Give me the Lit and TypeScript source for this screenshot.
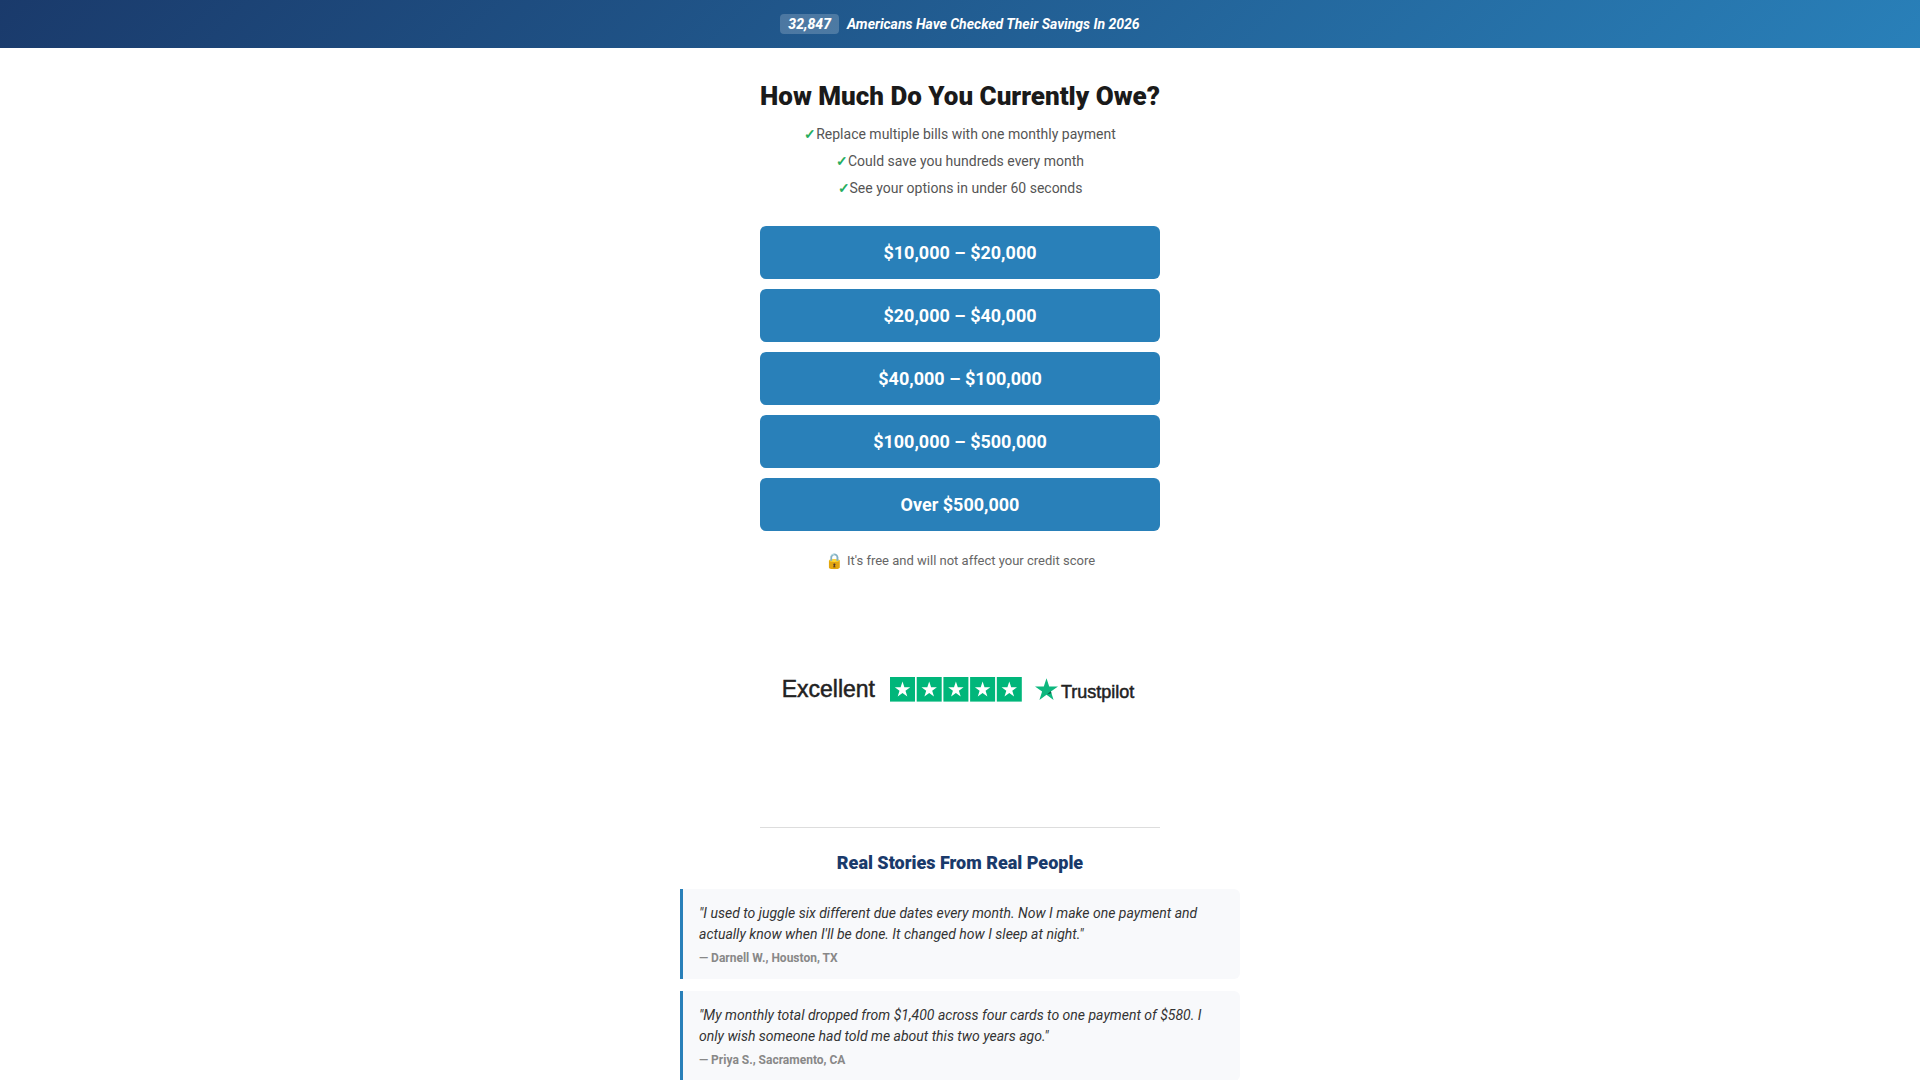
import { LitElement, html, svg, css } from "lit";
import { customElement } from "lit/decorators.js";

const BENEFITS = [
  "Replace multiple bills with one monthly payment",
  "Could save you hundreds every month",
  "See your options in under 60 seconds",
];

const AMOUNTS = [
  "$10,000 – $20,000",
  "$20,000 – $40,000",
  "$40,000 – $100,000",
  "$100,000 – $500,000",
  "Over $500,000",
];

const STORIES = [
  {
    quote:
      "I used to juggle six different due dates every month. Now I make one payment and actually know when I'll be done. It changed how I sleep at night.",
    author: "Darnell W., Houston, TX",
  },
  {
    quote:
      "My monthly total dropped from $1,400 across four cards to one payment of $580. I only wish someone had told me about this two years ago.",
    author: "Priya S., Sacramento, CA",
  },
];

// Left edge of each rating tile in the star strip.
const TILES = [0, 26.7, 53.4, 80.1, 106.8];

@customElement("trust-rating")
export class TrustRating extends LitElement {
  static styles = css`
    :host {
      display: flex;
      justify-content: center;
      align-items: center;
      font-family: "Liberation Sans", Arial, sans-serif;
      color: #222;
    }
    .word {
      font-size: 23px;
      line-height: 26px;
      -webkit-text-stroke: 0.5px #222;
    }
    .stars {
      display: block;
      width: 132px;
      height: 25px;
      margin: 0 13px 0 15px;
    }
    .brand {
      display: flex;
      align-items: center;
      gap: 3px;
    }
    .mark {
      display: block;
      width: 23px;
      height: 23px;
    }
    .name {
      font-size: 18px;
      line-height: 20px;
      padding-top: 6px;
      -webkit-text-stroke: 0.5px #222;
    }
  `;

  render() {
    return html`
      <span class="word">Excellent</span>
      <svg class="stars" viewBox="0 0 132 25" role="img" aria-label="5 out of 5 stars">
        ${TILES.map(
          (x) => svg`<g transform="translate(${x} 0)">
            <rect width="25" height="24.6" fill="#00b67a" />
            <path
              d="M12.5 4.6l1.9 5.6h5.8l-4.7 3.5 1.8 5.8-4.8-3.6-4.8 3.6 1.8-5.8-4.7-3.5h5.8z"
              fill="#fff"
            />
          </g>`
        )}
      </svg>
      <span class="brand">
        <svg class="mark" viewBox="0 0 23 23" aria-hidden="true">
          <path
            d="M11.5 .2l2.7 8.3h8.8l-7.1 5.1 2.7 8.4-7.1-5.2-7.1 5.2 2.7-8.4-7.1-5.1h8.8z"
            fill="#0db77e"
          />
          <path d="M15.7 13.3l.8 2-4.6 1.2z" fill="#075f45" />
        </svg>
        <span class="name">Trustpilot</span>
      </span>
    `;
  }
}

@customElement("app-root")
export class AppRoot extends LitElement {
  static styles = css`
    :host {
      display: block;
      height: 100vh;
      overflow: hidden;
      background: #fff;
      color: #1a1a1a;
      font-family: Roboto, "Liberation Sans", sans-serif;
    }
    .banner {
      display: flex;
      justify-content: center;
      align-items: center;
      gap: 8px;
      padding: 14px 16px;
      background: linear-gradient(135deg, #1a3a6b 0%, #2980b9 100%);
      color: #fff;
      font-size: 14px;
      line-height: 20px;
      font-weight: 700;
      font-style: italic;
    }
    .count {
      padding: 0 8px;
      border-radius: 4px;
      background: rgba(255, 255, 255, 0.2);
      font-weight: 800;
    }
    .funnel {
      max-width: 400px;
      margin: 0 auto;
      padding-top: 32px;
      text-align: center;
    }
    h1 {
      margin: 0 0 9px;
      font-size: 26px;
      line-height: 32px;
      font-weight: 900;
      white-space: nowrap;
    }
    .benefits {
      margin: 0 0 24px;
      padding: 0;
      list-style: none;
      color: #555;
      font-size: 14px;
      line-height: 27px;
    }
    .check {
      color: #27ae60;
      font-weight: 700;
    }
    .amounts {
      display: grid;
      gap: 10px;
    }
    .amount {
      padding: 16px;
      border: 0;
      border-radius: 6px;
      background: #2980b9;
      color: #fff;
      font-family: inherit;
      font-size: 18px;
      line-height: 21px;
      font-weight: 700;
      cursor: pointer;
    }
    .note {
      display: flex;
      justify-content: center;
      align-items: center;
      gap: 3px;
      margin: 20px 0 0;
      color: #666;
      font-size: 13px;
      line-height: 20px;
    }
    .lock {
      font-size: 15px;
    }
    .rating {
      padding: 105px 4px 125px 0;
      border-bottom: 1px solid #ddd;
    }
    .stories {
      max-width: 560px;
      margin: 0 auto;
      padding-top: 23px;
    }
    h2 {
      margin: 0 0 15px;
      color: #1a3a6b;
      font-size: 18px;
      line-height: 23px;
      font-weight: 900;
      text-align: center;
    }
    .story {
      margin: 0 0 12px;
      padding: 14px 16px;
      border-left: 3px solid #2980b9;
      border-radius: 0 6px 6px 0;
      background: #f8f9fb;
    }
    .quote {
      margin: 0;
      color: #333;
      font-size: 14px;
      line-height: 21px;
      font-style: italic;
    }
    .author {
      margin-top: 6px;
      color: #888;
      font-size: 12px;
      line-height: 14px;
      font-weight: 700;
    }
  `;

  render() {
    return html`
      <header class="banner">
        <span class="count">32,847</span>
        <span>Americans Have Checked Their Savings In 2026</span>
      </header>
      <main>
        <section class="funnel">
          <h1>How Much Do You Currently Owe?</h1>
          <ul class="benefits">
            ${BENEFITS.map((b) => html`<li><span class="check">✓</span>${b}</li>`)}
          </ul>
          <div class="amounts">
            ${AMOUNTS.map((a) => html`<button class="amount" type="button">${a}</button>`)}
          </div>
          <p class="note">
            <span class="lock">🔒</span>
            <span>It's free and will not affect your credit score</span>
          </p>
          <trust-rating class="rating"></trust-rating>
        </section>
        <section class="stories">
          <h2>Real Stories From Real People</h2>
          ${STORIES.map(
            (s) => html`<figure class="story">
              <blockquote class="quote">${`"${s.quote}"`}</blockquote>
              <figcaption class="author">${`— ${s.author}`}</figcaption>
            </figure>`
          )}
        </section>
      </main>
    `;
  }
}
